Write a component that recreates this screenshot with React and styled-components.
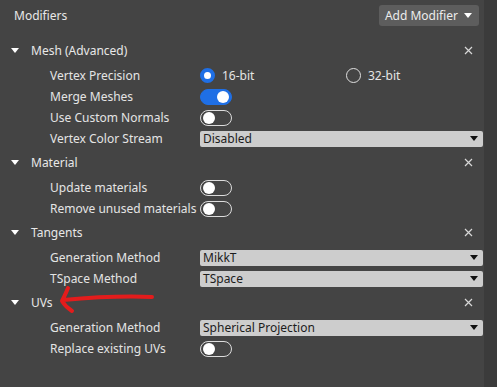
import React, { useState } from 'react';
import styled, { createGlobalStyle } from 'styled-components';

const GlobalStyle = createGlobalStyle`
  html, body {
    margin: 0;
    padding: 0;
    background: #3b3b3b;
  }
  body {
    font-family: "Noto Sans", "Open Sans", sans-serif;
    font-size: 12px;
    color: #e4e4e4;
  }
`;

const Panel = styled.div`
  position: relative;
  width: 484px;
  min-height: 387px;
  background: #444444;
  box-sizing: border-box;
`;

const TopBar = styled.div`
  display: flex;
  align-items: center;
  justify-content: space-between;
  height: 31px;
  padding: 0 5px 0 14px;
`;

const Title = styled.div`
  color: #e8e8e8;
`;

const AddButton = styled.button`
  display: flex;
  align-items: center;
  gap: 6px;
  height: 21px;
  padding: 0 7px 0 6px;
  border: none;
  border-radius: 3px;
  background: #5d5d5d;
  color: #ececec;
  font: inherit;
  cursor: pointer;
`;

const Caret = styled.span`
  width: 0;
  height: 0;
  border-left: 4.5px solid transparent;
  border-right: 4.5px solid transparent;
  border-top: 5px solid ${(p) => p.$color || '#ffffff'};
`;

const List = styled.div`
  padding-top: 6px;
`;

const Section = styled.div`
  display: flex;
  flex-direction: column;
`;

const SectionHead = styled.div`
  display: flex;
  align-items: center;
  height: 26px;
  padding: 0 8px 0 11px;
`;

const Triangle = styled.span`
  width: 0;
  height: 0;
  border-left: 4px solid transparent;
  border-right: 4px solid transparent;
  border-top: 5px solid #ffffff;
  margin-right: 12px;
`;

const SectionName = styled.div`
  flex: 1;
  color: #e8e8e8;
`;

const Close = styled.button`
  display: flex;
  align-items: center;
  justify-content: center;
  width: 16px;
  height: 16px;
  padding: 0;
  border: none;
  background: none;
  cursor: pointer;
`;

const Body = styled.div`
  padding-top: 2px;
`;

const Row = styled.div`
  display: grid;
  grid-template-columns: 200px 1fr;
  align-items: center;
  height: 21px;
  padding-right: 1px;
`;

const Label = styled.div`
  padding-left: 50px;
  white-space: nowrap;
  color: #e4e4e4;
`;

const RadioGroup = styled.div`
  display: flex;
  align-items: center;
`;

const RadioOption = styled.label`
  display: flex;
  align-items: center;
  width: 146px;
  gap: 7px;
  cursor: pointer;
`;

const RadioDot = styled.span`
  box-sizing: border-box;
  width: 15px;
  height: 15px;
  border-radius: 50%;
  border: ${(p) => (p.$on ? '4px solid #1f6fe5' : '1.5px solid #e0e0e0')};
  background: ${(p) => (p.$on ? '#ffffff' : 'transparent')};
`;

const Toggle = styled.span`
  box-sizing: border-box;
  display: flex;
  align-items: center;
  justify-content: ${(p) => (p.$on ? 'flex-end' : 'flex-start')};
  width: 32px;
  height: 16px;
  padding: 0 2px;
  border-radius: 8px;
  border: 1.5px solid ${(p) => (p.$on ? '#1f6fe5' : '#dcdcdc')};
  background: ${(p) => (p.$on ? '#1f6fe5' : 'transparent')};
  cursor: pointer;

  &::after {
    content: '';
    width: 12px;
    height: 12px;
    border-radius: 50%;
    background: #ffffff;
  }
`;

const Select = styled.div`
  display: flex;
  align-items: center;
  justify-content: space-between;
  height: 16px;
  padding: 0 5px 0 3px;
  border-radius: 2px;
  background: #cdcdcd;
  color: #1c1c1c;
`;

const Arrow = styled.svg`
  position: absolute;
  left: 56px;
  top: 284px;
  pointer-events: none;
`;

function CloseIcon() {
  return (
    <svg width="9" height="9" viewBox="0 0 9 9">
      <path d="M1 1 L8 8 M8 1 L1 8" stroke="#d8d8d8" strokeWidth="1.2" />
    </svg>
  );
}

function Dropdown({ value }) {
  return (
    <Select>
      <span>{value}</span>
      <Caret $color="#111111" />
    </Select>
  );
}

function ModSection({ name, children }) {
  return (
    <Section>
      <SectionHead>
        <Triangle />
        <SectionName>{name}</SectionName>
        <Close type="button"><CloseIcon /></Close>
      </SectionHead>
      <Body>{children}</Body>
    </Section>
  );
}

export default function App() {
  const [precision, setPrecision] = useState('16');
  const [flags, setFlags] = useState({
    merge: true,
    normals: false,
    update: false,
    remove: false,
    replace: false,
  });

  const flip = (key) => setFlags({ ...flags, [key]: !flags[key] });

  return (
    <>
      <GlobalStyle />
      <Panel>
        <TopBar>
          <Title>Modifiers</Title>
          <AddButton type="button">
            Add Modifier
            <Caret />
          </AddButton>
        </TopBar>
        <List>
          <ModSection name="Mesh (Advanced)">
            <Row>
              <Label>Vertex Precision</Label>
              <RadioGroup>
                <RadioOption onClick={() => setPrecision('16')}>
                  <RadioDot $on={precision === '16'} />
                  16-bit
                </RadioOption>
                <RadioOption onClick={() => setPrecision('32')}>
                  <RadioDot $on={precision === '32'} />
                  32-bit
                </RadioOption>
              </RadioGroup>
            </Row>
            <Row>
              <Label>Merge Meshes</Label>
              <div><Toggle $on={flags.merge} onClick={() => flip('merge')} /></div>
            </Row>
            <Row>
              <Label>Use Custom Normals</Label>
              <div><Toggle $on={flags.normals} onClick={() => flip('normals')} /></div>
            </Row>
            <Row>
              <Label>Vertex Color Stream</Label>
              <Dropdown value="Disabled" />
            </Row>
          </ModSection>
          <ModSection name="Material">
            <Row>
              <Label>Update materials</Label>
              <div><Toggle $on={flags.update} onClick={() => flip('update')} /></div>
            </Row>
            <Row>
              <Label>Remove unused materials</Label>
              <div><Toggle $on={flags.remove} onClick={() => flip('remove')} /></div>
            </Row>
          </ModSection>
          <ModSection name="Tangents">
            <Row>
              <Label>Generation Method</Label>
              <Dropdown value="MikkT" />
            </Row>
            <Row>
              <Label>TSpace Method</Label>
              <Dropdown value="TSpace" />
            </Row>
          </ModSection>
          <ModSection name="UVs">
            <Row>
              <Label>Generation Method</Label>
              <Dropdown value="Spherical Projection" />
            </Row>
            <Row>
              <Label>Replace existing UVs</Label>
              <div><Toggle $on={flags.replace} onClick={() => flip('replace')} /></div>
            </Row>
          </ModSection>
        </List>
        <Arrow width="104" height="32" viewBox="0 0 104 32">
          <path
            d="M96 13 C70 12 40 13 7 16 M12 4 C10 9 8 13 6 17 C9 22 13 25 16 27"
            fill="none"
            stroke="#e31c1c"
            strokeWidth="4"
            strokeLinecap="round"
            strokeLinejoin="round"
          />
        </Arrow>
      </Panel>
    </>
  );
}
